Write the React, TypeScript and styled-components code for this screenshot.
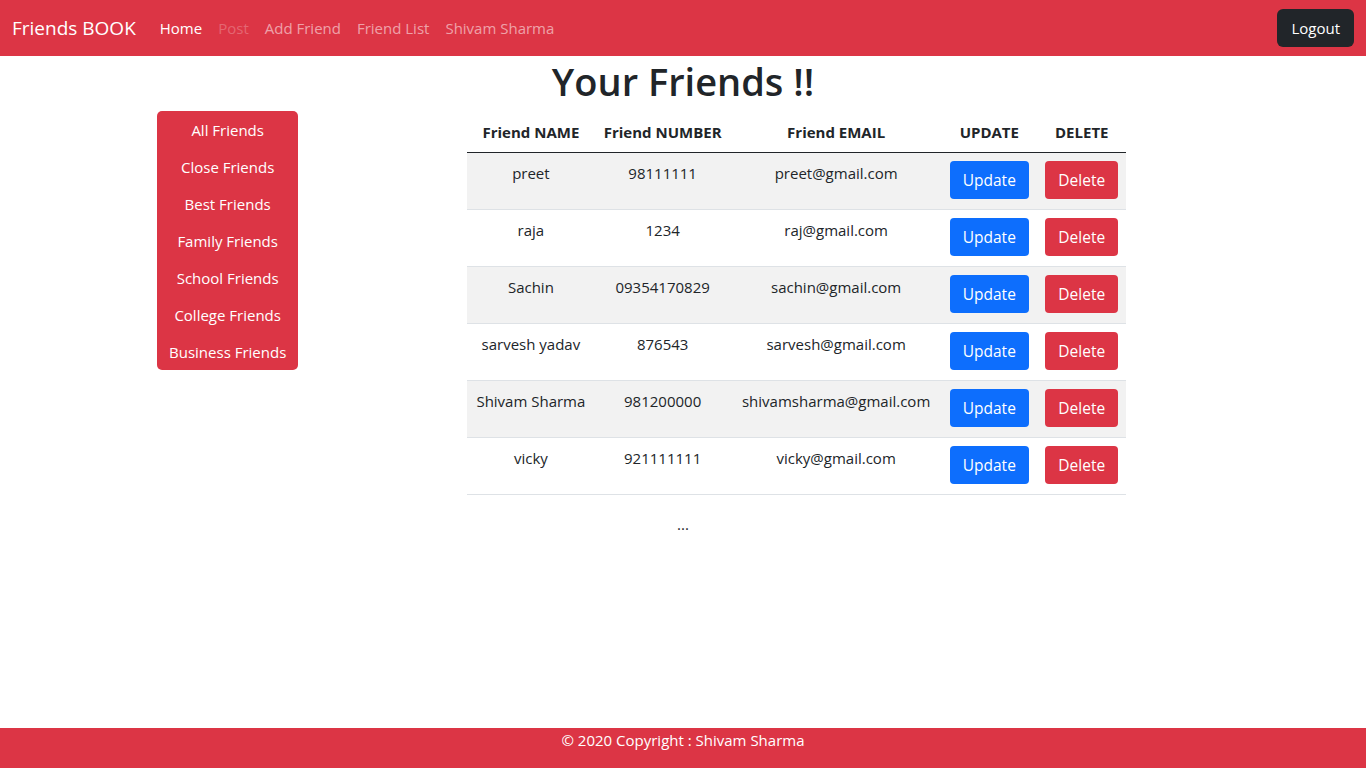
import React from "react";
import styled, { createGlobalStyle } from "styled-components";

const GlobalStyle = createGlobalStyle`
  * { box-sizing: border-box; }
  body {
    margin: 0;
    font-family: "Open Sans", "Noto Sans", "Liberation Sans", sans-serif;
    font-size: 15px;
    line-height: 24px;
    color: #212529;
    background: #fff;
  }
`;

// Navbar
const Navbar = styled.nav`
  height: 56px;
  background: #dc3545;
  display: flex;
  align-items: center;
  padding: 0 12px;
`;

const Brand = styled.span`
  font-size: 19px;
  color: #fff;
  margin-right: 16px;
  line-height: 30px;
`;

const NavLinks = styled.div`
  display: flex;
  flex: 1;
`;

const NavLink = styled.a<{ $state?: "active" | "disabled" }>`
  padding: 8px;
  font-size: 15px;
  text-decoration: none;
  cursor: pointer;
  color: ${(p) =>
    p.$state === "active"
      ? "#fff"
      : p.$state === "disabled"
      ? "rgba(255,255,255,0.25)"
      : "rgba(255,255,255,0.55)"};
`;

const LogoutButton = styled.button`
  background: #212529;
  color: #fff;
  border: none;
  border-radius: 6px;
  height: 38px;
  padding: 0 14px;
  font: inherit;
  font-size: 15px;
  cursor: pointer;
`;

// Content
const Title = styled.h1`
  margin: 1px 0 6px;
  text-align: center;
  font-size: 38px;
  font-weight: 600;
  line-height: 48px;
`;

const Row = styled.div`
  display: flex;
`;

const SideCol = styled.div`
  flex: 0 0 33.3333%;
  display: flex;
  justify-content: center;
  align-items: flex-start;
`;

const MainCol = styled.div`
  flex: 0 0 50%;
  padding: 1px 12px 0;
`;

const SideMenu = styled.div`
  width: 141px;
  background: #dc3545;
  border-radius: 5px;
  display: flex;
  flex-direction: column;
`;

const SideItem = styled.a`
  display: block;
  text-align: center;
  color: #fff;
  padding: 6.5px 0;
  font-size: 15px;
  line-height: 24px;
  white-space: nowrap;
  cursor: pointer;
`;

const Table = styled.table`
  width: 100%;
  border-collapse: collapse;
  text-align: center;
  margin-bottom: 17px;
`;

const Th = styled.th`
  padding: 8px 6px;
  font-weight: 700;
  font-size: 15px;
  border-bottom: 1px solid #212529;
  white-space: nowrap;
`;

const Tr = styled.tr<{ $striped: boolean }>`
  background: ${(p) => (p.$striped ? "#f2f2f2" : "#fff")};
  border-bottom: 1px solid #dee2e6;
`;

const Td = styled.td`
  padding: 8px 6px 10px;
  vertical-align: top;
  white-space: nowrap;
`;

const ActionButton = styled.button<{ $variant: "primary" | "danger" }>`
  background: ${(p) => (p.$variant === "primary" ? "#0d6efd" : "#dc3545")};
  color: #fff;
  border: none;
  border-radius: 4px;
  height: 38px;
  padding: 0 13px;
  font: inherit;
  font-size: 15.5px;
  cursor: pointer;
`;

const Ellipsis = styled.div`
  text-align: center;
  font-size: 15px;
`;

const Footer = styled.footer`
  position: fixed;
  left: 0;
  right: 0;
  bottom: 0;
  height: 40px;
  background: #dc3545;
  color: #fff;
  text-align: center;
  padding-top: 0;
  font-size: 15px;
`;

const friends = [
  { name: "preet", number: "98111111", email: "preet@gmail.com" },
  { name: "raja", number: "1234", email: "raj@gmail.com" },
  { name: "Sachin", number: "09354170829", email: "sachin@gmail.com" },
  { name: "sarvesh yadav", number: "876543", email: "sarvesh@gmail.com" },
  { name: "Shivam Sharma", number: "981200000", email: "shivamsharma@gmail.com" },
  { name: "vicky", number: "921111111", email: "vicky@gmail.com" },
];

const categories = [
  "All Friends",
  "Close Friends",
  "Best Friends",
  "Family Friends",
  "School Friends",
  "College Friends",
  "Business Friends",
];

const App: React.FC = () => {
  return (
    <>
      <GlobalStyle />
      <Navbar>
        <Brand>Friends BOOK</Brand>
        <NavLinks>
          <NavLink $state="active">Home</NavLink>
          <NavLink $state="disabled">Post</NavLink>
          <NavLink>Add Friend</NavLink>
          <NavLink>Friend List</NavLink>
          <NavLink>Shivam Sharma</NavLink>
        </NavLinks>
        <LogoutButton>Logout</LogoutButton>
      </Navbar>

      <Title>Your Friends !!</Title>
      <Row>
        <SideCol>
          <SideMenu>
            {categories.map((c) => (
              <SideItem key={c}>{c}</SideItem>
            ))}
          </SideMenu>
        </SideCol>
        <MainCol>
          <Table>
            <thead>
              <tr>
                <Th>Friend NAME</Th>
                <Th>Friend NUMBER</Th>
                <Th>Friend EMAIL</Th>
                <Th>UPDATE</Th>
                <Th>DELETE</Th>
              </tr>
            </thead>
            <tbody>
              {friends.map((f, i) => (
                <Tr key={f.email} $striped={i % 2 === 0}>
                  <Td>{f.name}</Td>
                  <Td>{f.number}</Td>
                  <Td>{f.email}</Td>
                  <Td>
                    <ActionButton $variant="primary">Update</ActionButton>
                  </Td>
                  <Td>
                    <ActionButton $variant="danger">Delete</ActionButton>
                  </Td>
                </Tr>
              ))}
            </tbody>
          </Table>
        </MainCol>
      </Row>
      <Ellipsis>...</Ellipsis>

      <Footer>© 2020 Copyright : Shivam Sharma</Footer>
    </>
  );
};

export default App;
